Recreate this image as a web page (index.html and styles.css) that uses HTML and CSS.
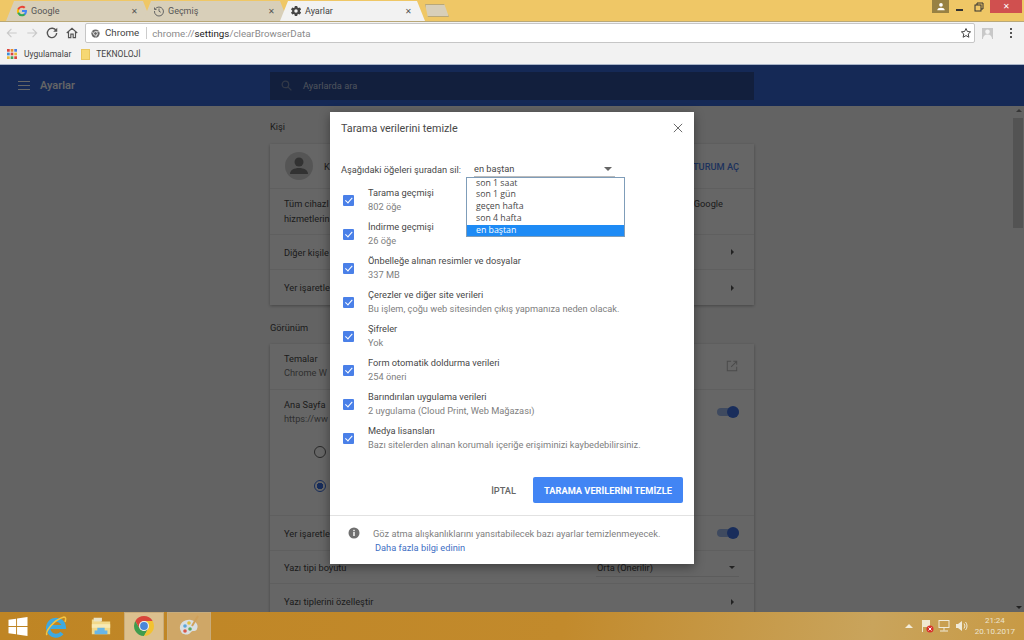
FILE: index.html
```html
<!DOCTYPE html>
<html lang="tr">
<head>
    <meta charset="UTF-8">
    <meta name="viewport" content="width=device-width, initial-scale=1.0">
    <title>Ayarlar</title>
    <link rel="stylesheet" href="styles.css">
</head>
<body>

<div class="tabstrip">
    <div class="tab">
        <svg class="tab-icon" viewBox="0 0 24 24"><path fill="#4285f4" d="M22 12.200c0-.7-.1-1.400-.2-2H12v3.900h5.600a4.800 4.800 0 0 1-2.100 3.100v2.600h3.300c2-1.800 3.200-4.500 3.200-7.600z"/><path fill="#34a853" d="M12 22.500c2.800 0 5.200-.9 6.800-2.500l-3.300-2.600c-.9.600-2.100 1-3.500 1-2.700 0-5-1.800-5.800-4.300H2.800v2.700a10.500 10.500 0 0 0 9.200 5.700z"/><path fill="#fbbc05" d="M6.200 14.100a6.300 6.300 0 0 1 0-4V7.400H2.800a10.500 10.500 0 0 0 0 9.400z"/><path fill="#ea4335" d="M12 5.700c1.500 0 2.900.5 4 1.500l3-3A10.500 10.500 0 0 0 2.800 7.400l3.400 2.700C7 7.500 9.300 5.700 12 5.700z"/></svg>
        <span class="tab-title">Google</span>
        <span class="tab-close">✕</span>
    </div>
    <div class="tab">
        <svg class="tab-icon" viewBox="0 0 24 24" fill="none" stroke="#666" stroke-width="2"><path d="M4.500 8A9 9 0 1 1 3 12"/><path d="M3 5v4h4"/><path d="M12 7v5.500l3.500 2"/></svg>
        <span class="tab-title">Geçmiş</span>
        <span class="tab-close">✕</span>
    </div>
    <div class="tab tab-active">
        <svg class="tab-icon" viewBox="0 0 24 24"><path fill="#444" fill-rule="evenodd" d="M19.900 13.200a8 8 0 0 0 0-2.400l2.400-1.800-2.400-4.100-2.800 1.100a8 8 0 0 0-2-1.200L14.400 2H9.600l-.4 2.800a8 8 0 0 0-2 1.200L4.400 4.900 2 9l2.400 1.800a8 8 0 0 0 0 2.400L2 15l2.400 4.100 2.800-1.100a8 8 0 0 0 2 1.200l.4 2.800h4.800l.4-2.800a8 8 0 0 0 2-1.200l2.800 1.100L22.300 15zM12 15.500a3.500 3.500 0 1 1 0-7 3.500 3.500 0 0 1 0 7z"/></svg>
        <span class="tab-title">Ayarlar</span>
        <span class="tab-close">✕</span>
    </div>
    <div class="tab-new"></div>
    <div class="win-controls">
        <div class="win-user"><svg viewBox="0 0 12 12" width="10" height="10"><circle cx="6" cy="3.500" r="2.200" fill="#fff"/><path fill="#fff" d="M1.500 10c0-2 2-3 4.500-3s4.500 1 4.500 3z"/></svg></div>
        <div class="win-btn"><svg viewBox="0 0 10 10" width="10" height="10"><rect x="1" y="7" width="7" height="2" fill="#333"/></svg></div>
        <div class="win-btn"><svg viewBox="0 0 10 10" width="10" height="10" fill="none" stroke="#333"><rect x="1" y="3" width="6" height="6"/><path d="M3 3V1h6v6H7"/></svg></div>
        <div class="win-close">✕</div>
    </div>
</div>

<div class="toolbar">
    <svg class="tool" viewBox="0 0 24 24" fill="none" stroke="#c9c9c9" stroke-width="2"><path d="M20 12H5M11 5l-7 7 7 7"/></svg>
    <svg class="tool" viewBox="0 0 24 24" fill="none" stroke="#c9c9c9" stroke-width="2"><path d="M4 12h15M13 5l7 7-7 7"/></svg>
    <svg class="tool" viewBox="0 0 24 24" fill="none" stroke="#555" stroke-width="2.400"><path d="M19 8a8 8 0 1 0 1 4"/><path fill="#555" stroke="none" d="M21 3v7h-7z"/></svg>
    <svg class="tool" viewBox="0 0 24 24" fill="none" stroke="#555" stroke-width="2"><path d="M3 12l9-8 9 8M6 10v10h4v-6h4v6h4V10"/></svg>
    <div class="omnibox">
        <svg class="chip-icon" viewBox="0 0 24 24"><circle cx="12" cy="12" r="11" fill="#666"/><circle cx="12" cy="12" r="5" fill="#666" stroke="#fff" stroke-width="2"/><path d="M12 7h10M7.500 14.500l-5-8.500M16.500 14.500L11.500 23" stroke="#fff" stroke-width="1.500"/></svg>
        <span class="chip-label">Chrome</span>
        <span class="url"><span class="url-dim">chrome://</span>settings<span class="url-dim">/clearBrowserData</span></span>
        <svg class="star" viewBox="0 0 24 24" fill="none" stroke="#444" stroke-width="2"><path d="M12 3l2.800 6 6.400.7-4.800 4.300 1.400 6.500L12 17.200l-5.800 3.300 1.400-6.500-4.800-4.300 6.400-.7z"/></svg>
    </div>
    <div class="ext-icon"><svg viewBox="0 0 12 12" width="11" height="11"><circle cx="6" cy="4" r="2.500" fill="#f3f3f3"/><path fill="#f3f3f3" d="M1 12c0-3 2-5 5-5s5 2 5 5z"/></svg></div>
    <div class="menu-dots"><i></i><i></i><i></i></div>
</div>

<div class="bookmarks">
    <svg class="apps" viewBox="0 0 11 11">
        <rect x="0" y="0" width="3" height="3" fill="#d9473f"/><rect x="4" y="0" width="3" height="3" fill="#e58b2f"/><rect x="8" y="0" width="3" height="3" fill="#4a7fe0"/>
        <rect x="0" y="4" width="3" height="3" fill="#3e8fd6"/><rect x="4" y="4" width="3" height="3" fill="#d9473f"/><rect x="8" y="4" width="3" height="3" fill="#e8b93a"/>
        <rect x="0" y="8" width="3" height="3" fill="#e8b93a"/><rect x="4" y="8" width="3" height="3" fill="#45a557"/><rect x="8" y="8" width="3" height="3" fill="#d9473f"/>
    </svg>
    <span class="bm-text">Uygulamalar</span>
    <span class="bm-folder"></span>
    <span class="bm-text">TEKNOLOJİ</span>
</div>

<div class="page">
    <header class="app-header">
        <div class="app-brand">
            <div class="burger"><i></i><i></i><i></i></div>
            <span>Ayarlar</span>
        </div>
        <div class="app-search">
            <svg viewBox="0 0 24 24" width="13" height="13" fill="none" stroke="#7d8cb0" stroke-width="2.400"><circle cx="10" cy="10" r="6"/><path d="M15 15l6 6"/></svg>
            <span>Ayarlarda ara</span>
        </div>
    </header>

    <div class="app-body">
        <main class="settings">
            <h2>Kişi</h2>
            <section class="card">
                <div class="row row-account">
                    <div class="avatar"><svg viewBox="0 0 28 28" width="28" height="28"><circle cx="14" cy="10" r="4.500" fill="#7d7d7d"/><path fill="#7d7d7d" d="M5 22c0-4 4-6 9-6s9 2 9 6z"/></svg></div>
                    <span class="grow">K</span>
                    <span class="signin">TURUM AÇ</span>
                </div>
                <div class="row row-text">
                    <p class="grow">Tüm cihazl<br>hizmetlerin</p>
                    <p class="row-text-end">Google<br>&nbsp;</p>
                </div>
                <div class="row row-short"><span class="grow">Diğer kişile</span><span class="chevron"></span></div>
                <div class="row row-short"><span class="grow">Yer işaretle</span><span class="chevron"></span></div>
            </section>

            <h2>Görünüm</h2>
            <section class="card">
                <div class="row row-two">
                    <div class="grow"><div>Temalar</div><div class="dim">Chrome W</div></div>
                    <svg class="open-icon" viewBox="0 0 14 14" fill="none" stroke="#bbb" stroke-width="1.200"><path d="M6 1.500H1.500v11h11V8M8.500 1.500h4v4M12.500 1.500L6 8"/></svg>
                </div>
                <div class="row-home">
                    <div class="row-home-top">
                        <div class="grow"><div>Ana Sayfa</div><div class="dim">https://ww</div></div>
                        <span class="toggle"></span>
                    </div>
                    <div class="radio-line"><span class="radio"></span></div>
                    <div class="radio-line"><span class="radio radio-on"></span></div>
                </div>
                <div class="row row-short"><span class="grow">Yer işaretle</span><span class="toggle"></span></div>
                <div class="row row-font">
                    <span class="grow">Yazı tipi boyutu</span>
                    <div class="font-select"><span>Orta (Önerilir)</span><span class="caret"></span></div>
                </div>
                <div class="row row-short"><span class="grow">Yazı tiplerini özelleştir</span><span class="chevron"></span></div>
            </section>
        </main>
        <div class="scrollbar">
            <span class="scroll-up"></span>
            <span class="scroll-thumb"></span>
            <span class="scroll-down"></span>
        </div>
    </div>

    <div class="scrim"></div>

    <div class="dialog">
        <div class="dialog-head">
            <span>Tarama verilerini temizle</span>
            <svg viewBox="0 0 12 12" width="10" height="10" stroke="#6b6b6b" stroke-width="1.200"><path d="M1 1l10 10M11 1L1 11"/></svg>
        </div>

        <div class="range">
            <span class="range-label">Aşağıdaki öğeleri şuradan sil:</span>
            <div class="select">
                <span>en baştan</span>
                <span class="select-arrow"></span>
                <ul class="dropdown">
                    <li>son 1 saat</li>
                    <li>son 1 gün</li>
                    <li>geçen hafta</li>
                    <li>son 4 hafta</li>
                    <li class="picked">en baştan</li>
                </ul>
            </div>
        </div>

        <div class="checks">
            <div class="check-row"><span class="box"></span><div><div class="check-title">Tarama geçmişi</div><div class="check-sub">802 öğe</div></div></div>
            <div class="check-row"><span class="box"></span><div><div class="check-title">İndirme geçmişi</div><div class="check-sub">26 öğe</div></div></div>
            <div class="check-row"><span class="box"></span><div><div class="check-title">Önbelleğe alınan resimler ve dosyalar</div><div class="check-sub">337 MB</div></div></div>
            <div class="check-row"><span class="box"></span><div><div class="check-title">Çerezler ve diğer site verileri</div><div class="check-sub">Bu işlem, çoğu web sitesinden çıkış yapmanıza neden olacak.</div></div></div>
            <div class="check-row"><span class="box"></span><div><div class="check-title">Şifreler</div><div class="check-sub">Yok</div></div></div>
            <div class="check-row"><span class="box"></span><div><div class="check-title">Form otomatik doldurma verileri</div><div class="check-sub">254 öneri</div></div></div>
            <div class="check-row"><span class="box"></span><div><div class="check-title">Barındırılan uygulama verileri</div><div class="check-sub">2 uygulama (Cloud Print, Web Mağazası)</div></div></div>
            <div class="check-row"><span class="box"></span><div><div class="check-title">Medya lisansları</div><div class="check-sub">Bazı sitelerden alınan korumalı içeriğe erişiminizi kaybedebilirsiniz.</div></div></div>
        </div>

        <div class="actions">
            <button class="btn-cancel">İPTAL</button>
            <button class="btn-clear">TARAMA VERİLERİNİ TEMİZLE</button>
        </div>

        <div class="dialog-foot">
            <svg viewBox="0 0 12 12" width="12" height="12"><circle cx="6" cy="6" r="5.500" fill="#6f6f6f"/><rect x="5.300" y="5" width="1.400" height="4" fill="#fff"/><rect x="5.300" y="2.800" width="1.400" height="1.400" fill="#fff"/></svg>
            <div>
                <div class="foot-note">Göz atma alışkanlıklarını yansıtabilecek bazı ayarlar temizlenmeyecek.</div>
                <a class="foot-link">Daha fazla bilgi edinin</a>
            </div>
        </div>
    </div>
</div>

<footer class="taskbar">
    <div class="task task-start"><svg viewBox="0 0 20 20" width="20" height="19"><path fill="#fff" d="M0 3l8-1.200V9.500H0zM9 1.600L20 0v9.500H9zM0 10.500h8v7.700L0 17zM9 10.500h11V20L9 18.400z"/></svg></div>
    <div class="task task-ie"><svg viewBox="0 0 24 24" width="24" height="24"><path fill="none" stroke="#3fa9e0" stroke-width="4" d="M5 13h15a8 8 0 1 0-2 6"/><path fill="none" stroke="#f4c542" stroke-width="1.500" d="M3 21c-2-3 6-15 17-18 2 0 2 2 1 5"/></svg></div>
    <div class="task task-folder"><svg viewBox="0 0 24 24" width="24" height="22"><path fill="#f2d98a" d="M2 5h8l2 2h10v14H2z"/><rect x="4" y="3" width="9" height="4" fill="#e9e3c8"/><path fill="#f8eab4" d="M2 10h20v4H2z"/><path fill="#69b6e6" d="M8 14h8v3h3v4H5v-4h3z"/></svg></div>
    <div class="task task-chrome"><svg viewBox="0 0 24 24" width="24" height="24"><path fill="#3f9c4d" d="M3.340 7L7.670 14.500A5 5 0 0 0 16.330 14.500L12 22A10 10 0 0 1 3.340 7z"/><path fill="#f2c230" d="M20.660 7H12A5 5 0 0 1 16.330 14.500L12 22A10 10 0 0 0 20.660 7z"/><path fill="#d8453a" d="M3.340 7A10 10 0 0 1 20.660 7H12A5 5 0 0 0 7.670 14.500z"/><circle cx="12" cy="12" r="5" fill="#eee"/><circle cx="12" cy="12" r="3.900" fill="#4a86d8"/></svg></div>
    <div class="task task-paint"><svg viewBox="0 0 24 24" width="24" height="24"><path fill="#d9dfe2" d="M3 15c-1-6 5-10 11-9 5 1 8 5 6 9-1 3-4 1-6 3-2 3-5 3-7 2-2 0-3-2-4-5z"/><circle cx="8" cy="12" r="1.800" fill="#5aa5d8"/><circle cx="12" cy="9" r="1.800" fill="#e0c040"/><circle cx="8" cy="17" r="1.800" fill="#d8584a"/><circle cx="13" cy="15" r="1.800" fill="#5ba860"/><path stroke="#cfa05a" stroke-width="2" d="M15 12L21 2"/></svg></div>
    <div class="tray">
        <span class="tray-up"></span>
        <svg viewBox="0 0 14 14" width="14" height="14"><path fill="#f0e8d0" d="M2 1h1v12H2zM3 1h7v7H3z"/><circle cx="10" cy="10" r="3.500" fill="#d8322c"/><path stroke="#fff" d="M8.500 8.500l3 3M11.500 8.500l-3 3"/></svg>
        <svg viewBox="0 0 14 14" width="14" height="14" fill="none" stroke="#f0ead8"><rect x="2" y="1.500" width="10" height="7"/><path d="M7 8.500v3M3 12h8"/></svg>
        <svg viewBox="0 0 14 14" width="14" height="14"><path fill="#f0ead8" d="M2 5h2l4-3v10L4 9H2z"/><path fill="none" stroke="#f0ead8" d="M10 4.500a4 4 0 0 1 0 5M11.500 3a6 6 0 0 1 0 8"/></svg>
        <div class="clock"><div>21:24</div><div>20.10.2017</div></div>
    </div>
</footer>

</body>
</html>
```

FILE: styles.css
```css
html, body {
    height: 640px;
    overflow: hidden;
}
body {
    margin: 0;
    font-family: Roboto, "Liberation Sans", sans-serif;
    font-size: 9.25px;
    color: #484848;
    display: flex;
    flex-direction: column;
}

/* browser chrome */
.tabstrip {
    height: 21px;
    padding-left: 6px;
    background-color: #efc766;
    display: flex;
    align-items: flex-end;
    border-bottom: 1px solid #b9a878;
}
.tab {
    width: 145px;
    height: 20px;
    margin-right: -8px;
    padding: 0 13px 0 10px;
    box-sizing: border-box;
    background-color: #d8cfb9;
    clip-path: polygon(0 100%, 8px 0, calc(100% - 8px) 0, 100% 100%);
    display: flex;
    align-items: center;
    font-size: 9px;
    color: #555;
}
.tab-active {
    background-color: #f2f2f2;
    color: #444;
}
.tab-icon {
    width: 12px;
    height: 12px;
    margin-right: 3px;
}
.tab-title {
    flex: 1;
}
.tab-close {
    font-size: 8px;
    color: #555;
}
.tab-new {
    width: 22px;
    height: 11px;
    margin: 0 0 4px 8px;
    background-color: #d8cfb9;
    border: 1px solid #b9a878;
    clip-path: polygon(0 0, 80% 0, 100% 100%, 12% 100%);
}
.win-controls {
    margin-left: auto;
    align-self: flex-start;
    display: flex;
    height: 13px;
    padding-right: 2px;
}
.win-user {
    width: 17px;
    background-color: #988143;
    display: flex;
    align-items: center;
    justify-content: center;
    margin-right: 2px;
}
.win-btn {
    width: 18px;
    display: flex;
    align-items: center;
    justify-content: center;
    margin-right: 1px;
}
.win-close {
    width: 32px;
    margin-left: 1px;
    background-color: #d0504f;
    color: #fff;
    font-size: 8px;
    line-height: 13px;
    text-align: center;
}
.toolbar {
    height: 22px;
    background-color: #f2f2f2;
    display: flex;
    align-items: center;
    padding-left: 5px;
}
.tool {
    width: 14px;
    height: 14px;
    margin-right: 6px;
}
.omnibox {
    width: 890px;
    height: 20px;
    box-sizing: border-box;
    background-color: #fff;
    border: 1px solid #c6c6c6;
    border-radius: 2px;
    display: flex;
    align-items: center;
    padding: 0 2px 0 5px;
    font-size: 9.75px;
}
.chip-icon {
    width: 9px;
    height: 9px;
    margin-right: 5px;
}
.chip-label {
    color: #444;
    padding-right: 7px;
    border-right: 1px solid #ccc;
    margin-right: 5px;
    line-height: 12px;
}
.url {
    flex: 1;
    color: #222;
}
.url-dim {
    color: #8a8a8a;
}
.star {
    width: 12px;
    height: 12px;
}
.ext-icon {
    width: 11px;
    height: 11px;
    margin-left: 7px;
    background-color: #c8c8c8;
    overflow: hidden;
}
.menu-dots {
    margin-left: 17px;
    display: flex;
    flex-direction: column;
    gap: 2px;
}
.menu-dots i {
    width: 2px;
    height: 2px;
    background-color: #555;
}
.bookmarks {
    height: 21px;
    background-color: #f2f2f2;
    display: flex;
    align-items: center;
    padding-left: 7px;
    font-size: 8.5px;
    color: #444;
    border-bottom: 1px solid #a9b4c8;
    box-sizing: border-box;
}
.apps {
    width: 10px;
    height: 10px;
    margin-right: 7px;
}
.bm-text {
    margin-right: 10px;
}
.bm-folder {
    width: 9px;
    height: 11px;
    background-color: #f6d873;
    border: 1px solid #e9c65e;
    box-sizing: border-box;
    margin-right: 6px;
}

/* settings page */
.page {
    position: relative;
    flex: 1;
    display: flex;
    flex-direction: column;
    min-height: 0;
}
.app-header {
    height: 41px;
    flex: none;
    background-color: #3668d8;
    display: flex;
    align-items: center;
}
.app-brand {
    width: 270px;
    padding-left: 18px;
    box-sizing: border-box;
    display: flex;
    align-items: center;
    gap: 10px;
    color: #fff;
    font-size: 11px;
    font-weight: 500;
}
.burger {
    width: 12px;
    display: flex;
    flex-direction: column;
    gap: 2.500px;
}
.burger i {
    height: 1.500px;
    background-color: #fff;
}
.app-search {
    width: 484px;
    height: 28px;
    background-color: #2d4f99;
    display: flex;
    align-items: center;
    gap: 10px;
    padding-left: 10px;
    box-sizing: border-box;
    color: #c3cde2;
}
.app-body {
    flex: 1;
    min-height: 0;
    display: flex;
    background-color: #f8f8f8;
    overflow: hidden;
}
.settings {
    flex: 1;
    padding-left: 270px;
}
.settings h2 {
    width: 484px;
    margin: 0;
    font-size: 9.25px;
    font-weight: 400;
    color: #484848;
    line-height: 12px;
    padding: 15px 0 11px;
}
.settings h2:nth-of-type(2) {
    padding: 17px 0 10px;
}
.card {
    width: 484px;
    background-color: #fff;
    box-shadow: 0 1px 3px rgba(0, 0, 0, 0.3);
}
.row {
    display: flex;
    align-items: center;
    padding: 0 15px 0 14px;
    border-bottom: 1px solid #eee;
    box-sizing: border-box;
}
.row:last-child {
    border-bottom: none;
}
.grow {
    flex: 1;
}
.row-account {
    height: 45px;
}
.avatar {
    width: 28px;
    height: 28px;
    border-radius: 50%;
    background-color: #d5d5d5;
    margin: 0 11px 0 1px;
}
.signin {
    color: #4a7de8;
    font-weight: 500;
}
.row-text {
    height: 46px;
    padding-bottom: 2px;
}
.row-text p {
    margin: 0;
    line-height: 15px;
    white-space: nowrap;
}
.row-text-end {
    padding-right: 16px;
}
.row-short {
    height: 35px;
}
.row-two {
    height: 46px;
    padding-bottom: 2px;
}
.dim {
    color: #777;
    margin-top: 3px;
}
.chevron {
    width: 0;
    height: 0;
    margin-right: 5px;
    border-left: 3px solid #555;
    border-top: 3px solid transparent;
    border-bottom: 3px solid transparent;
}
.font-select {
    width: 143px;
    height: 18px;
    margin-top: 1px;
    display: flex;
    align-items: center;
    justify-content: space-between;
    border-bottom: 1px solid #e6e6e6;
    box-sizing: border-box;
    padding-left: 1px;
}
.caret {
    width: 0;
    height: 0;
    margin-right: 4px;
    border-top: 3px solid #555;
    border-left: 3.500px solid transparent;
    border-right: 3.500px solid transparent;
}
.open-icon {
    width: 12px;
    height: 12px;
    margin-right: 1px;
}
.row-home {
    height: 126px;
    border-bottom: 1px solid #eee;
    box-sizing: border-box;
    padding: 9px 15px 0 14px;
}
.row-home-top {
    display: flex;
    align-items: center;
    margin-bottom: 11px;
}
.radio-line {
    height: 34px;
    display: flex;
    align-items: center;
    padding-left: 30px;
}
.radio {
    width: 12px;
    height: 12px;
    border: 1.500px solid #666;
    border-radius: 50%;
    box-sizing: border-box;
}
.radio-on {
    border-color: #3b6fe0;
    background: radial-gradient(circle, #3b6fe0 0 3px, transparent 3.500px);
}
.toggle {
    position: relative;
    width: 22px;
    height: 8px;
    border-radius: 4px;
    background-color: #9db8ee;
}
.toggle::after {
    content: "";
    position: absolute;
    right: 0;
    top: -2px;
    width: 12px;
    height: 12px;
    border-radius: 50%;
    background-color: #3f72e4;
}
.row-font {
    height: 33px;
}
.scrollbar {
    width: 11px;
    position: relative;
    background-color: #f7f7f7;
}
.scroll-thumb {
    position: absolute;
    left: 0;
    right: 1px;
    top: 12px;
    height: 110px;
    background-color: #cfcfcf;
}
.scroll-up, .scroll-down {
    position: absolute;
    left: 3px;
    width: 0;
    height: 0;
    border-left: 3px solid transparent;
    border-right: 3px solid transparent;
}
.scroll-up {
    top: 3px;
    border-bottom: 3px solid #888;
}
.scroll-down {
    bottom: 3px;
    border-top: 3px solid #555;
}
.scrim {
    position: absolute;
    inset: 0;
    background-color: rgba(0, 0, 0, 0.6);
}

/* dialog */
.dialog {
    position: absolute;
    left: 330px;
    top: 47px;
    width: 364px;
    height: 452px;
    background-color: #fff;
    box-shadow: 0 3px 10px rgba(0, 0, 0, 0.4);
    display: flex;
    flex-direction: column;
}
.dialog-head {
    height: 32px;
    padding: 0 11px;
    display: flex;
    align-items: center;
    justify-content: space-between;
    font-size: 10.75px;
    color: #484848;
}
.range {
    height: 39px;
    padding: 11px 11px 0;
    display: flex;
    align-items: center;
    box-sizing: border-box;
}
.range-label {
    width: 133px;
    white-space: nowrap;
}
.select {
    position: relative;
    width: 141px;
    height: 14px;
    border-bottom: 1px solid #bbb;
    display: flex;
    align-items: center;
    justify-content: space-between;
}
.select-arrow {
    width: 0;
    height: 0;
    margin-right: 3px;
    border-top: 4px solid #666;
    border-left: 4px solid transparent;
    border-right: 4px solid transparent;
}
.dropdown {
    position: absolute;
    left: -8px;
    top: 15px;
    width: 159px;
    margin: 0;
    padding: 0;
    list-style: none;
    background-color: #fff;
    border: 1px solid #7f9db9;
    box-sizing: border-box;
    font-family: "Open Sans", sans-serif;
    font-size: 8.75px;
    z-index: 1;
}
.dropdown li {
    height: 11.800px;
    line-height: 11.800px;
    padding-left: 9px;
}
.dropdown .picked {
    background-color: #1e8bf5;
    color: #fff;
}
.checks {
    padding-left: 13px;
}
.check-row {
    height: 34px;
    display: flex;
    align-items: center;
    gap: 14px;
}
.box {
    position: relative;
    flex: none;
    width: 11px;
    height: 11px;
    border-radius: 1px;
    background-color: #4a80e8;
}
.box::after {
    content: "";
    position: absolute;
    left: 3.500px;
    top: 1.500px;
    width: 3px;
    height: 5.500px;
    border: solid #fff;
    border-width: 0 1.500px 1.500px 0;
    transform: rotate(42deg);
}
.check-title {
    line-height: 14px;
}
.check-sub {
    color: #808080;
    line-height: 14px;
}
.actions {
    display: flex;
    justify-content: flex-end;
    align-items: center;
    gap: 17px;
    padding: 22px 11px 12px 0;
}
button {
    font-family: inherit;
    font-size: 9.25px;
    font-weight: 500;
    border: none;
}
.btn-cancel {
    background: none;
    color: #666;
    padding: 0;
}
.btn-clear {
    width: 150px;
    height: 26px;
    padding: 0;
    background-color: #4285f4;
    color: #fff;
    border-radius: 2px;
    font-weight: 700;
}
.dialog-foot {
    flex: 1;
    border-top: 1px solid #e2e2e2;
    display: flex;
    align-items: flex-start;
    gap: 13px;
    padding: 11px 0 0 18px;
}
.foot-note {
    color: #808080;
    line-height: 14px;
}
.foot-link {
    color: #3f6fc4;
    line-height: 14px;
    padding-left: 2px;
}

/* windows taskbar */
.taskbar {
    height: 28px;
    flex: none;
    background: linear-gradient(100deg, #bf8524 0%, #c28a2c 55%, #c9a45c 85%, #c89a45 100%);
    display: flex;
    align-items: center;
}
.task {
    height: 27px;
    display: flex;
    align-items: center;
    justify-content: center;
}
.task-start {
    width: 36px;
    margin-right: 1px;
}
.task-ie {
    width: 38px;
    margin-right: 7px;
}
.task-folder {
    width: 38px;
    margin-right: 5px;
}
.task-chrome {
    width: 38px;
    margin-right: 5px;
    background-color: #dcc08e;
    outline: 1px solid #c9ac7a;
}
.task-paint {
    width: 42px;
    background-color: #cfa767;
    outline: 1px solid #c9ac7a;
}
.tray {
    margin-left: auto;
    display: flex;
    align-items: center;
    gap: 3px;
    color: #ece4d0;
    font-size: 8px;
    padding-right: 9px;
}
.tray-up {
    width: 0;
    height: 0;
    margin-right: 4px;
    border-bottom: 4px solid #f3ecd9;
    border-left: 4px solid transparent;
    border-right: 4px solid transparent;
}
.clock {
    margin-left: 4px;
    text-align: center;
    line-height: 11px;
}
```
